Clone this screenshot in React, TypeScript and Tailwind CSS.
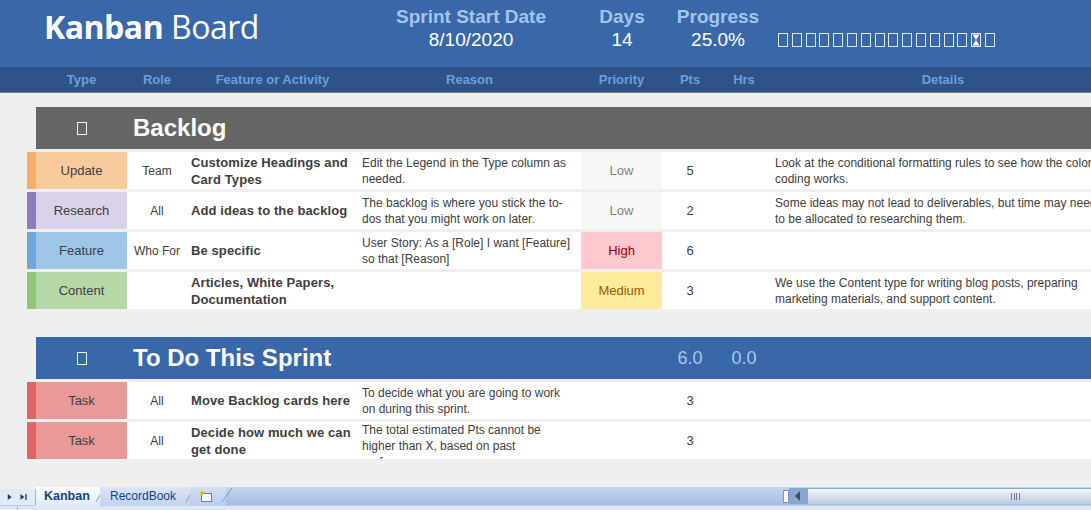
import React from "react";

type Kind = "Update" | "Research" | "Feature" | "Content" | "Task";

const kindStyle: Record<Kind, { stripe: string; cell: string }> = {
  Update: { stripe: "bg-[#f6ad6a]", cell: "bg-[#f9cb9c]" },
  Research: { stripe: "bg-[#8e7cc3]", cell: "bg-[#d9d2e9]" },
  Feature: { stripe: "bg-[#6fa8dc]", cell: "bg-[#9fc5e8]" },
  Content: { stripe: "bg-[#93c47d]", cell: "bg-[#b6d7a8]" },
  Task: { stripe: "bg-[#e06666]", cell: "bg-[#ea9999]" },
};

type Priority = "Low" | "High" | "Medium" | "";

const priorityStyle: Record<string, string> = {
  Low: "bg-[#f7f7f7] text-[#808080]",
  High: "bg-[#ffc7ce] text-[#9c0006]",
  Medium: "bg-[#ffeb9c] text-[#9c5700]",
  "": "bg-white",
};

interface Card {
  kind: Kind;
  role: string;
  feature: string[];
  reason: string[];
  priority: Priority;
  pts: number;
  details: string[];
  reasonTop?: boolean;
}

const backlog: Card[] = [
  {
    kind: "Update",
    role: "Team",
    feature: ["Customize Headings and", "Card Types"],
    reason: ["Edit the Legend in the Type column as", "needed."],
    priority: "Low",
    pts: 5,
    details: ["Look at the conditional formatting rules to see how the color", "coding works."],
  },
  {
    kind: "Research",
    role: "All",
    feature: ["Add ideas to the backlog"],
    reason: ["The backlog is where you stick the to-", "dos that you might work on later."],
    priority: "Low",
    pts: 2,
    details: ["Some ideas may not lead to deliverables, but time may need", "to be allocated to researching them."],
  },
  {
    kind: "Feature",
    role: "Who For",
    feature: ["Be specific"],
    reason: ["User Story: As a [Role] I want [Feature]", "so that [Reason]"],
    priority: "High",
    pts: 6,
    details: [],
  },
  {
    kind: "Content",
    role: "",
    feature: ["Articles, White Papers,", "Documentation"],
    reason: [],
    priority: "Medium",
    pts: 3,
    details: ["We use the Content type for writing blog posts, preparing", "marketing materials, and support content."],
  },
];

const sprint: Card[] = [
  {
    kind: "Task",
    role: "All",
    feature: ["Move Backlog cards here"],
    reason: ["To decide what you are going to work", "on during this sprint."],
    priority: "",
    pts: 3,
    details: [],
  },
  {
    kind: "Task",
    role: "All",
    feature: ["Decide how much we can", "get done"],
    reason: ["The total estimated Pts cannot be", "higher than X, based on past", "performance."],
    priority: "",
    pts: 3,
    details: [],
    reasonTop: true,
  },
];

function Lines({ lines }: { lines: string[] }) {
  return (
    <div>
      {lines.map((l, i) => (
        <div key={i} className="whitespace-nowrap">
          {l}
        </div>
      ))}
    </div>
  );
}

function CardRow({ card }: { card: Card }) {
  const k = kindStyle[card.kind];
  return (
    <div className="grid grid-cols-[9px_91px_60px_171px_223px_81px_56px_52px_346px] h-[37px] bg-white text-[#404040]">
      <div className={k.stripe} />
      <div className={`${k.cell} flex items-center justify-center text-[13px]`}>{card.kind}</div>
      <div className="flex items-center justify-center text-[12px]">{card.role}</div>
      <div className="flex items-center pl-[4px] text-[13px] font-bold leading-[17px] tracking-[0.1px] overflow-hidden">
        <Lines lines={card.feature} />
      </div>
      <div
        className={`flex pl-[4px] text-[12px] leading-[16px] overflow-hidden ${
          card.reasonTop ? "items-start" : "items-center"
        }`}
      >
        <Lines lines={card.reason} />
      </div>
      <div className={`${priorityStyle[card.priority]} flex items-center justify-center text-[13px]`}>
        {card.priority}
      </div>
      <div className="flex items-center justify-center text-[13px]">{card.pts}</div>
      <div />
      <div className="flex items-center pl-[5px] text-[12px] leading-[16px] overflow-hidden">
        <Lines lines={card.details} />
      </div>
    </div>
  );
}

function Tofu() {
  return <span className="inline-block w-[10px] h-[13px] border border-white/90" />;
}

function SectionHeader({
  title,
  bg,
  pts,
  hrs,
}: {
  title: string;
  bg: string;
  pts?: string;
  hrs?: string;
}) {
  return (
    <div className={`ml-[9px] h-[42px] grid grid-cols-[91px_454px_81px_56px_52px_1fr] items-center ${bg}`}>
      <div className="flex justify-center">
        <Tofu />
      </div>
      <div className="pl-[6px] text-white text-[24px] font-bold leading-none whitespace-nowrap">{title}</div>
      <div />
      <div className="text-center text-[18px] text-[#a9c7ec]">{pts}</div>
      <div className="text-center text-[18px] text-[#a9c7ec]">{hrs}</div>
      <div />
    </div>
  );
}

function Hourglass() {
  return (
    <svg width="10" height="14" viewBox="0 0 10 14" className="block">
      <rect x="0.5" y="0.5" width="9" height="13" fill="none" stroke="#dfe7f3" />
      <path d="M1.5 1.5 H8.5 L5 7 L8.5 12.5 H1.5 L5 7 Z" fill="#ffffff" />
    </svg>
  );
}

function Progress() {
  return (
    <div className="flex gap-[3.8px] mt-[33px]">
      {Array.from({ length: 16 }).map((_, i) =>
        i === 14 ? (
          <Hourglass key={i} />
        ) : (
          <span key={i} className="block w-[10px] h-[14px] border border-[#dfe7f3]" />
        )
      )}
    </div>
  );
}

function Stat({ label, value, cls }: { label: string; value: string; cls: string }) {
  return (
    <div className={`${cls} pt-[7px] text-center whitespace-nowrap`}>
      <div className="text-[19px] leading-[20px] font-bold text-[#a3c4ec]">{label}</div>
      <div className="mt-[3px] text-[19px] leading-[20px] text-white">{value}</div>
    </div>
  );
}

function SheetTabs() {
  return (
    <div className="h-[23px] flex flex-col shrink-0">
      <div className="h-[18px] flex">
        <div className="w-[36px] flex flex-col">
          <div className="h-[2px]" />
          <div className="flex-1 bg-[#e2eaf6] border-r border-[#9fb6da] flex items-center">
            <svg width="36" height="16" viewBox="0 0 36 16">
              <path d="M8 5 L12 8 L8 11 Z" fill="#1f3b70" />
              <path d="M21 5 L25 8 L21 11 Z" fill="#1f3b70" />
              <rect x="26" y="5" width="1.4" height="6" fill="#1f3b70" />
            </svg>
          </div>
        </div>
        <div className="flex-1 flex flex-col">
          <div className="h-[2px] bg-[#3b6cb4]" />
          <div className="flex-1 flex bg-gradient-to-b from-[#c4d5ee] to-[#a2bce3]">
            <div className="relative w-[64px] bg-gradient-to-b from-white to-[#dfe9f7] flex items-center pl-[8px] text-[12.5px] font-bold text-[#15428b]">
              Kanban
              <svg className="absolute right-[-6px] top-0" width="10" height="16" viewBox="0 0 10 16">
                <path d="M0 15 L8 1" stroke="#7e9cc9" strokeWidth="1" fill="none" />
              </svg>
            </div>
            <div className="relative w-[90px] bg-gradient-to-b from-[#dbe6f6] to-[#c0d3ee] flex items-center pl-[10px] text-[12px] text-[#15428b]">
              RecordBook
              <svg className="absolute right-[-6px] top-0" width="10" height="16" viewBox="0 0 10 16">
                <path d="M0 15 L8 1" stroke="#7e9cc9" strokeWidth="1" fill="none" />
              </svg>
            </div>
            <div className="relative w-[36px] bg-gradient-to-b from-[#d3e0f3] to-[#b9cdec] flex items-center pl-[8px]">
              <svg width="16" height="14" viewBox="0 0 16 14">
                <rect x="3.5" y="4.5" width="10" height="8" fill="#f4f7fb" stroke="#6b7d99" />
                <path d="M4 1 L5 3 L7 3.5 L5 4.5 L4 7 L3 4.5 L1 3.5 L3 3 Z" fill="#f2b600" />
              </svg>
              <svg className="absolute right-[-8px] top-0" width="12" height="16" viewBox="0 0 12 16">
                <path d="M0 15 L10 1" stroke="#7e9cc9" strokeWidth="1" fill="none" />
              </svg>
            </div>
            <div className="ml-auto w-[308px] flex items-center">
              <div className="w-[6px] h-[13px] bg-white border border-[#7a96c4]" />
              <div className="w-[18px] h-[16px] bg-[#8aa6d0] flex items-center justify-center">
                <svg width="8" height="10" viewBox="0 0 8 10">
                  <path d="M6 0 L1 5 L6 10 Z" fill="#3d4f6b" />
                </svg>
              </div>
              <div className="flex-1 h-[16px] bg-gradient-to-b from-[#f4f6fa] to-[#bccbe0] border-l border-t border-[#8ea8cf] flex items-center">
                <div className="ml-[203px] flex gap-[1.5px]">
                  <span className="block w-[1px] h-[7px] bg-[#6d7d96]" />
                  <span className="block w-[1px] h-[7px] bg-[#6d7d96]" />
                  <span className="block w-[1px] h-[7px] bg-[#6d7d96]" />
                  <span className="block w-[1px] h-[7px] bg-[#6d7d96]" />
                </div>
              </div>
            </div>
          </div>
        </div>
      </div>
      <div className="h-[5px] bg-[#dde7f5] border-t border-[#bccde6] flex">
        <div className="w-[18px] border-r border-[#a9bcd9]" />
      </div>
    </div>
  );
}

export default function App() {
  return (
    <div className="w-[1091px] h-[510px] overflow-hidden bg-[#efefef] flex flex-col font-['Liberation_Sans',Arial,sans-serif]">
      <div className="h-[67px] bg-[#3868aa] flex shrink-0">
        <div className="w-[390px] pl-[44px] pt-[11px] text-white text-[32px] leading-[32px] tracking-[-0.5px] whitespace-nowrap font-['Open_Sans','Noto_Sans',sans-serif]">
          <span className="font-bold">Kanban</span> <span>Board</span>
        </div>
        <Stat label="Sprint Start Date" value="8/10/2020" cls="w-[162px]" />
        <Stat label="Days" value="14" cls="w-[60px] ml-[40px]" />
        <Stat label="Progress" value="25.0%" cls="w-[100px] ml-[16px]" />
        <div className="ml-[10px]">
          <Progress />
        </div>
      </div>
      <div className="h-[26px] bg-[#2f5388] border-b border-[#808080] shrink-0 pl-[27px]">
        <div className="grid grid-cols-[9px_91px_60px_171px_223px_81px_56px_52px_346px] h-[25px] items-center text-[13px] font-bold text-[#6a9fdd] whitespace-nowrap">
          <div />
          <div className="text-center">Type</div>
          <div className="text-center">Role</div>
          <div className="text-center">Feature or Activity</div>
          <div className="text-center">Reason</div>
          <div className="text-center">Priority</div>
          <div className="text-center">Pts</div>
          <div className="text-center">Hrs</div>
          <div className="text-center">Details</div>
        </div>
      </div>
      <div className="flex-1 pl-[27px] pt-[14px]">
        <SectionHeader title="Backlog" bg="bg-[#666666]" />
        <div className="mt-[3px] flex flex-col gap-[3px]">
          {backlog.map((c, i) => (
            <CardRow key={i} card={c} />
          ))}
        </div>
        <div className="mt-[28px]">
          <SectionHeader title="To Do This Sprint" bg="bg-[#3868aa]" pts="6.0" hrs="0.0" />
        </div>
        <div className="mt-[3px] flex flex-col gap-[3px]">
          {sprint.map((c, i) => (
            <CardRow key={i} card={c} />
          ))}
        </div>
      </div>
      <SheetTabs />
    </div>
  );
}
